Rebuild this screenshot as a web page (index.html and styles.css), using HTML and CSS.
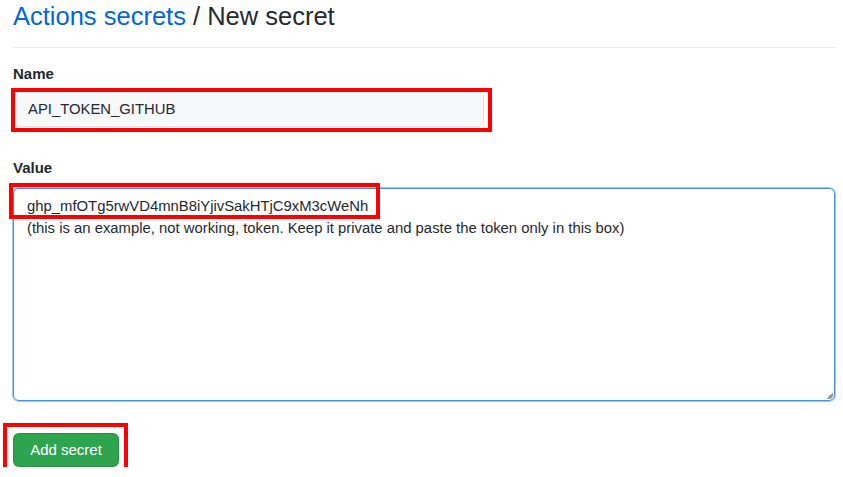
FILE: index.html
```html
<!DOCTYPE html>
<html lang="en">
<head>
<meta charset="utf-8">
<title>New secret</title>
<link rel="stylesheet" href="styles.css">
</head>
<body>
<main class="page">
  <h1 class="title"><a class="crumb" href="#">Actions secrets</a> / New secret</h1>
  <form class="form">
    <label class="label">Name</label>
    <div class="field name-field">
      <div class="input">API_TOKEN_GITHUB</div>
      <span class="mark mark-name"></span>
    </div>
    <label class="label label-value">Value</label>
    <div class="field value-field">
      <div class="textarea">
        <div class="line"><span class="typo">ghp</span>_mfOTg5rwVD4mnB8iYjivSakHTjC9xM3cWeNh</div>
        <div class="line">(this is an example, not working, token. Keep it private and paste the token only in this box)</div>
        <span class="grip"></span>
      </div>
      <span class="mark mark-value"></span>
    </div>
    <div class="field btn-field">
      <button type="button" class="btn">Add secret</button>
      <span class="mark mark-btn"></span>
    </div>
  </form>
</main>
</body>
</html>
```

FILE: styles.css
```css
html, body {
  margin: 0;
  padding: 0;
  background: #ffffff;
}
body {
  font-family: "Liberation Sans", Arial, Helvetica, sans-serif;
  color: #24292e;
}
.page {
  width: 823px;
  padding-left: 13px;
}
.title {
  margin: 0;
  font-size: 25.5px;
  line-height: 32px;
  font-weight: 400;
  padding-bottom: 15px;
  border-bottom: 1px solid #eaecef;
  color: #24292e;
}
.crumb {
  color: #0366d6;
  text-decoration: none;
}
.form {
  display: flex;
  flex-direction: column;
  align-items: flex-start;
  padding-top: 15px;
}
.label {
  font-size: 15px;
  line-height: 22px;
  font-weight: 700;
  margin-bottom: 6px;
}
.label-value {
  margin-top: 30px;
  margin-bottom: 9px;
}
.field {
  position: relative;
}
.input {
  width: 441px;
  height: 34px;
  padding: 0 14px;
  background: #f6f8fa;
  border: 1px solid #e1e4e8;
  border-radius: 6px;
  font-size: 14.85px;
  line-height: 34px;
  color: #24292e;
}
.value-field {
  align-self: stretch;
  margin-right: 1px;
}
.textarea {
  position: relative;
  height: 199px;
  padding: 6px 13px;
  border: 1px solid #4a8fe0;
  box-shadow: 0 0 0 1px rgba(86, 150, 230, 0.55);
  border-radius: 6px;
  font-size: 14.85px;
  line-height: 22px;
  color: #24292e;
}
.typo {
  text-decoration: underline wavy #e0201a;
  text-decoration-skip-ink: none;
  text-underline-offset: 3px;
  text-decoration-thickness: 1px;
}
.grip {
  position: absolute;
  right: 1px;
  bottom: 1px;
  width: 7px;
  height: 7px;
  background: linear-gradient(135deg, transparent 50%, #9a9a9a 50%);
  border-bottom-right-radius: 4px;
}
.btn-field {
  margin-top: 32px;
}
.btn {
  display: block;
  width: 106px;
  height: 34px;
  padding: 0;
  border: 1px solid rgba(27, 31, 35, 0.15);
  border-radius: 6px;
  background: #2ea44f;
  color: #ffffff;
  font-family: "Liberation Sans", Arial, Helvetica, sans-serif;
  font-size: 15px;
  line-height: 32px;
  text-align: center;
}
.mark {
  position: absolute;
  border: 4px solid #ff0000;
  pointer-events: none;
}
.mark-name {
  left: -2px;
  right: -8px;
  top: -3px;
  bottom: -5px;
}
.mark-value {
  left: -4px;
  top: -5px;
  width: 363px;
  height: 28px;
}
.mark-btn {
  left: -10px;
  right: -9px;
  top: -10px;
  bottom: -7px;
}
```
